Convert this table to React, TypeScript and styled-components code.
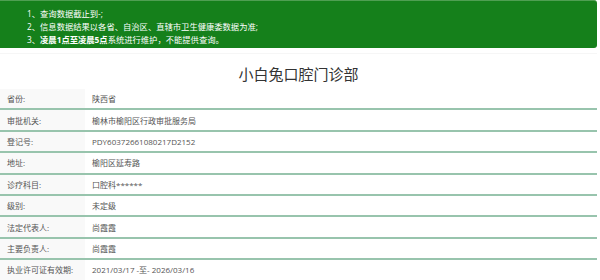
import React from 'react';
import styled, { createGlobalStyle } from 'styled-components';

const GlobalStyle = createGlobalStyle`
  html, body {
    margin: 0;
    padding: 0;
    background: #fff;
  }
  body {
    font-family: "Open Sans", "Noto Sans CJK SC", sans-serif;
    color: #555;
  }
`;

const rows: { label: string; value: string }[] = [
  { label: '省份:', value: '陕西省' },
  { label: '审批机关:', value: '榆林市榆阳区行政审批服务局' },
  { label: '登记号:', value: 'PDY60372661080217D2152' },
  { label: '地址:', value: '榆阳区延寿路' },
  { label: '诊疗科目:', value: '口腔科******' },
  { label: '级别:', value: '未定级' },
  { label: '法定代表人:', value: '尚霞霞' },
  { label: '主要负责人:', value: '尚霞霞' },
  { label: '执业许可证有效期:', value: '2021/03/17 -至- 2026/03/16' },
];

const App: React.FC = () => {
  return (
    <Page>
      <GlobalStyle />
      <Notice>
        <li>1、查询数据截止到-;</li>
        <li>2、信息数据结果以各省、自治区、直辖市卫生健康委数据为准;</li>
        <li>
          3、<b>凌晨1点至凌晨5点</b>系统进行维护，不能提供查询。
        </li>
      </Notice>

      <Title>小白兔口腔门诊部</Title>

      <Table>
        <tbody>
          {rows.map((r) => (
            <Row key={r.label}>
              <Label>{r.label}</Label>
              <Value>{r.value}</Value>
            </Row>
          ))}
        </tbody>
      </Table>
    </Page>
  );
};

export default App;

const Page = styled.div`
  width: 597px;
`;

const Notice = styled.ul`
  list-style: none;
  margin: 0;
  padding: 7px 0 2px 27px;
  height: 48px;
  box-sizing: border-box;
  background-color: #15801b;
  border-top: 1px solid #4f9f52;
  border-radius: 0 3px 3px 0;
  color: #fff;
  font-size: 8.3px;
  line-height: 13px;

  li {
    white-space: nowrap;
  }

  li:first-child {
    margin-top: -1px;
  }

  b {
    font-weight: bold;
  }
`;

const Title = styled.h1`
  margin: 5px 0 0;
  padding: 10px 0 5px;
  text-align: center;
  font-size: 15px;
  font-weight: normal;
  line-height: 20px;
  color: #333;
  border-top: 1px solid #f6f6f6;
`;

const Table = styled.table`
  width: 100%;
  border-collapse: collapse;
  font-size: 8px;
  color: #555;
`;

const Row = styled.tr`
  border-bottom: 2px solid #98c4ad;
`;

const Label = styled.td`
  width: 78px;
  height: 19.4px;
  padding: 0 0 0 7px;
  background: #f9f9f9;
  white-space: nowrap;
`;

const Value = styled.td`
  padding: 0 0 0 7px;
  white-space: nowrap;
`;
